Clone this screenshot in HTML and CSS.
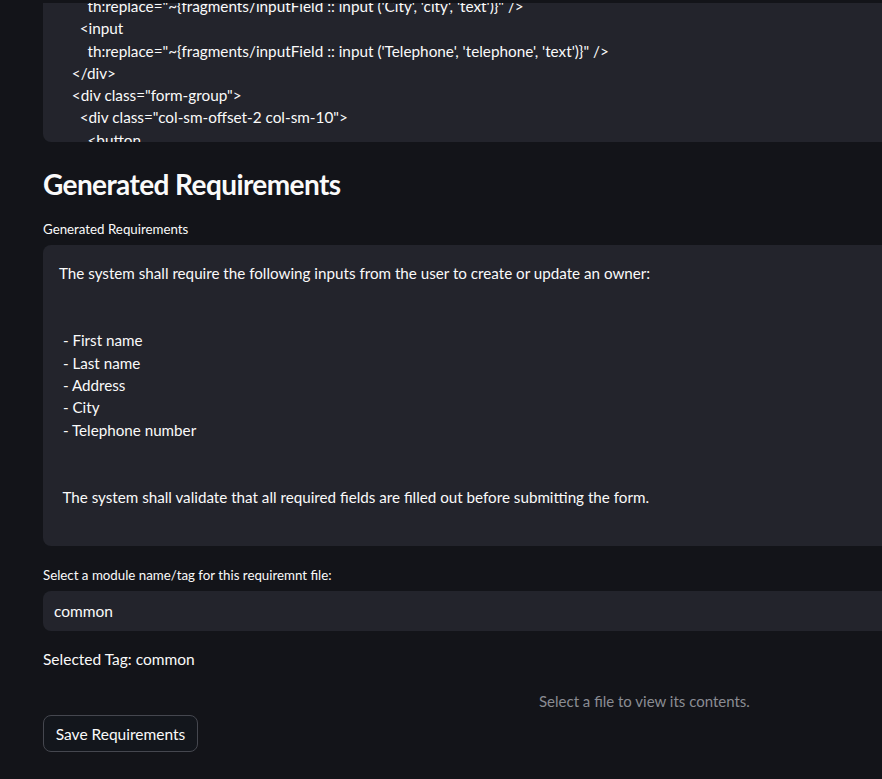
FILE: index.html
```html
<!DOCTYPE html>
<html>
<head>
<meta charset="utf-8">
<link rel="stylesheet" href="styles.css">
</head>
<body>
<div class="main">
  <div class="code-box">
    <pre class="code-text">      th:replace="~{fragments/inputField :: input ('City', 'city', 'text')}" />
    &lt;input
      th:replace="~{fragments/inputField :: input ('Telephone', 'telephone', 'text')}" />
  &lt;/div>
  &lt;div class="form-group">
    &lt;div class="col-sm-offset-2 col-sm-10">
      &lt;button</pre>
  </div>

  <h2 class="heading">Generated Requirements</h2>

  <div class="label">Generated Requirements</div>
  <div class="textarea"><pre class="ta-text">The system shall require the following inputs from the user to create or update an owner:


 - First name
 - Last name
 - Address
 - City
 - Telephone number


 The system shall validate that all required fields are filled out before submitting the form.</pre></div>

  <div class="label label-2">Select a module name/tag for this requiremnt file:</div>
  <div class="select">common</div>

  <div class="selected">Selected Tag: common</div>
  <div class="placeholder">Select a file to view its contents.</div>

  <button class="btn">Save Requirements</button>
</div>
</body>
</html>
```
FILE: styles.css
```css
html, body {
  margin: 0;
  padding: 0;
  background: #131419;
  overflow: hidden;
  height: 100%;
}

body {
  font-family: Lato, "Noto Sans", sans-serif;
  color: #fafafa;
}

.main {
  padding: 3px 0 0 43px;
  margin-right: -120px;
}

.code-box {
  background: #23242c;
  height: 139px;
  overflow: hidden;
  border-radius: 0 0 8px 8px;
}

.code-text {
  margin: -8px 0 0 0;
  padding: 0 0 0 21px;
  font-family: inherit;
  font-size: 15.3px;
  line-height: 22.3px;
  white-space: pre;
  color: #fafafa;
}

.heading {
  margin: 22px 0 0 0;
  font-size: 28px;
  letter-spacing: -0.6px;
  line-height: 40px;
  font-weight: 700;
  color: #fafafa;
}

.label {
  margin-top: 15px;
  font-size: 13.3px;
  line-height: 20px;
  color: #fafafa;
}

.label-2 {
  margin-top: 19px;
}

.textarea {
  margin-top: 6px;
  height: 301px;
  box-sizing: border-box;
  background: #23242c;
  border-radius: 8px;
  padding: 17px 0 0 16px;
}

.ta-text {
  margin: 0;
  font-family: inherit;
  font-size: 15.2px;
  line-height: 22.4px;
  white-space: pre;
  color: #fafafa;
}

.select {
  margin-top: 6px;
  height: 40px;
  box-sizing: border-box;
  background: #23242c;
  border-radius: 8px;
  padding-left: 11px;
  font-size: 15.5px;
  line-height: 40px;
}

.selected {
  margin-top: 16px;
  font-size: 15.5px;
  line-height: 24px;
}

.placeholder {
  margin-top: 18px;
  padding-left: 496px;
  font-size: 15px;
  line-height: 24px;
  color: #8a8c93;
}

.btn {
  margin-top: 2px;
  display: block;
  height: 37px;
  width: 155px;
  box-sizing: border-box;
  background: #13161c;
  border: 1px solid #45474f;
  border-radius: 8px;
  color: #fafafa;
  font-family: inherit;
  font-size: 15.5px;
  padding: 0;
}
```
